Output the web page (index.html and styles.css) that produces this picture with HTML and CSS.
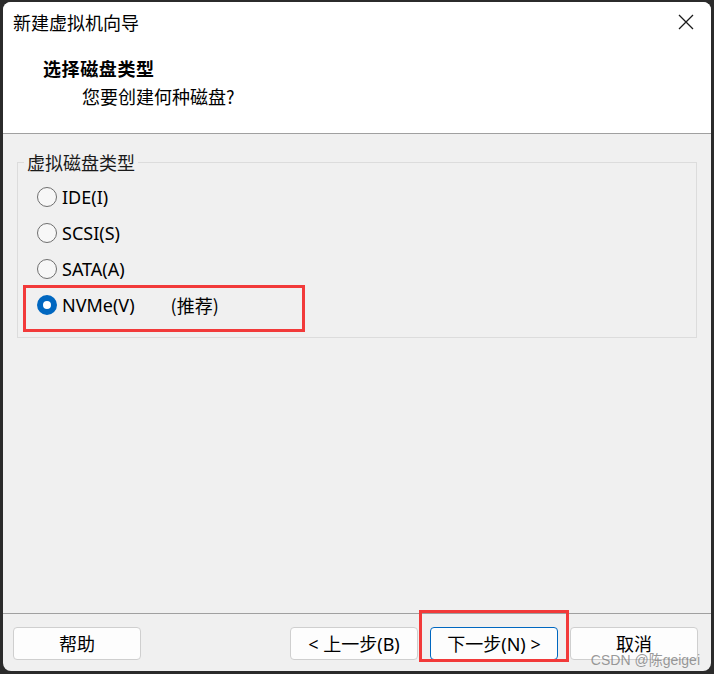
FILE: index.html
```html
<!DOCTYPE html>
<html lang="zh-CN">
<head>
<meta charset="utf-8">
<title>新建虚拟机向导</title>
<link rel="stylesheet" href="styles.css">
</head>
<body>
<div class="window">
  <header class="header">
    <div class="titlebar">
      <span class="title">新建虚拟机向导</span>
      <span class="close" aria-label="关闭">
        <svg width="16" height="16" viewBox="0 0 16 16"><path d="M1 1L15 15M15 1L1 15" stroke="#1a1a1a" stroke-width="1.3" fill="none"/></svg>
      </span>
    </div>
    <div class="heading">选择磁盘类型</div>
    <div class="subtitle">您要创建何种磁盘?</div>
  </header>
  <main class="content">
    <fieldset class="group">
      <legend class="legend">虚拟磁盘类型</legend>
      <label class="radio-row"><span class="radio"></span><span class="label">IDE(I)</span></label>
      <label class="radio-row"><span class="radio"></span><span class="label">SCSI(S)</span></label>
      <label class="radio-row"><span class="radio"></span><span class="label">SATA(A)</span></label>
      <label class="radio-row highlighted"><span class="radio checked"></span><span class="label">NVMe(V)</span><span class="note">(推荐)</span><span class="mark mark-row"></span></label>
    </fieldset>
  </main>
  <footer class="footer">
    <button class="btn">帮助</button>
    <div class="spacer"></div>
    <button class="btn">&lt; 上一步(B)</button>
    <button class="btn primary">下一步(N) &gt;<span class="mark mark-btn"></span></button>
    <button class="btn">取消</button>
    <span class="watermark">CSDN @陈geigei</span>
  </footer>
</div>
</body>
</html>
```
FILE: styles.css
```css
* { box-sizing: border-box; }
html, body { margin: 0; padding: 0; }
body {
  background: #2b2b2b;
  width: 714px;
  height: 674px;
  overflow: hidden;
  font-family: "Noto Sans", "Noto Sans CJK SC", sans-serif;
  color: #000;
}
.window {
  margin: 2px 3px 3px 3px;
  height: 669px;
  background: #f0f0f0;
  border-radius: 8px;
  overflow: hidden;
  display: flex;
  flex-direction: column;
  position: relative;
}
.header {
  background: #ffffff;
  height: 132px;
  border-bottom: 1px solid #a0a0a0;
  flex: none;
}
.titlebar {
  height: 40px;
  display: flex;
  align-items: center;
  justify-content: space-between;
  padding: 0 17px 0 10px;
}
.title {
  font-family: "Noto Sans CJK SC", sans-serif;
  font-size: 18px;
  line-height: 24px;
}
.close { display: flex; width: 16px; height: 16px; }
.heading {
  margin-top: 14px;
  padding-left: 40px;
  font-family: "Noto Sans CJK SC", sans-serif;
  font-weight: 700;
  font-size: 18px;
  line-height: 24px;
  letter-spacing: 0.6px;
}
.subtitle {
  margin-top: 4px;
  padding-left: 79px;
  font-family: "Noto Sans CJK SC", sans-serif;
  font-size: 18px;
  line-height: 24px;
}
.content {
  flex: 1;
  padding: 16px 14px 0 14px;
  border-bottom: 1px solid #a0a0a0;
}
.group {
  margin: 0;
  border: 1px solid #dcdcdc;
  padding: 5px 6px 14px 6px;
  min-width: 0;
}
.legend {
  padding: 0 3px;
  font-family: "Noto Sans CJK SC", sans-serif;
  font-size: 18px;
  line-height: 24px;
  color: #1a1a1a;
}
.radio-row {
  display: flex;
  align-items: center;
  height: 36px;
  margin-left: 13px;
  position: relative;
}
.radio {
  width: 20px;
  height: 20px;
  border-radius: 50%;
  border: 1.5px solid #6f6f6f;
  background: #f7f7f7;
  flex: none;
}
.radio.checked {
  border: 6.5px solid #0067c0;
  background: #ffffff;
}
.label {
  margin-left: 5px;
  font-size: 18px;
  line-height: 24px;
  color: #000;
}
.note {
  margin-left: 36px;
  font-family: "Noto Sans CJK SC", sans-serif;
  font-size: 18px;
  line-height: 24px;
}
.mark {
  position: absolute;
  border: 3px solid #f23a3a;
  pointer-events: none;
}
.mark-row {
  left: -14px;
  top: -2px;
  width: 282px;
  height: 47px;
}
.footer {
  height: 57px;
  flex: none;
  display: flex;
  align-items: flex-start;
  padding: 13px 13px 0 10px;
  gap: 12px;
  position: relative;
}
.spacer { flex: 1; }
.btn {
  width: 128px;
  height: 33px;
  border: 1px solid #cfcfcf;
  border-radius: 4px;
  background: #fdfdfd;
  font-family: "Noto Sans", "Noto Sans CJK SC", sans-serif;
  font-size: 18px;
  line-height: 24px;
  color: #000;
  padding: 0;
  position: relative;
}
.btn.primary {
  border-color: #0067c0;
}
.mark-btn {
  left: -12px;
  top: -18px;
  width: 150px;
  height: 52px;
}
.watermark {
  position: absolute;
  right: 11px;
  bottom: 2px;
  font-family: "Liberation Sans", "Noto Sans CJK SC", sans-serif;
  font-size: 14px;
  line-height: 17px;
  color: rgba(120, 120, 120, 0.75);
  pointer-events: none;
}
```
